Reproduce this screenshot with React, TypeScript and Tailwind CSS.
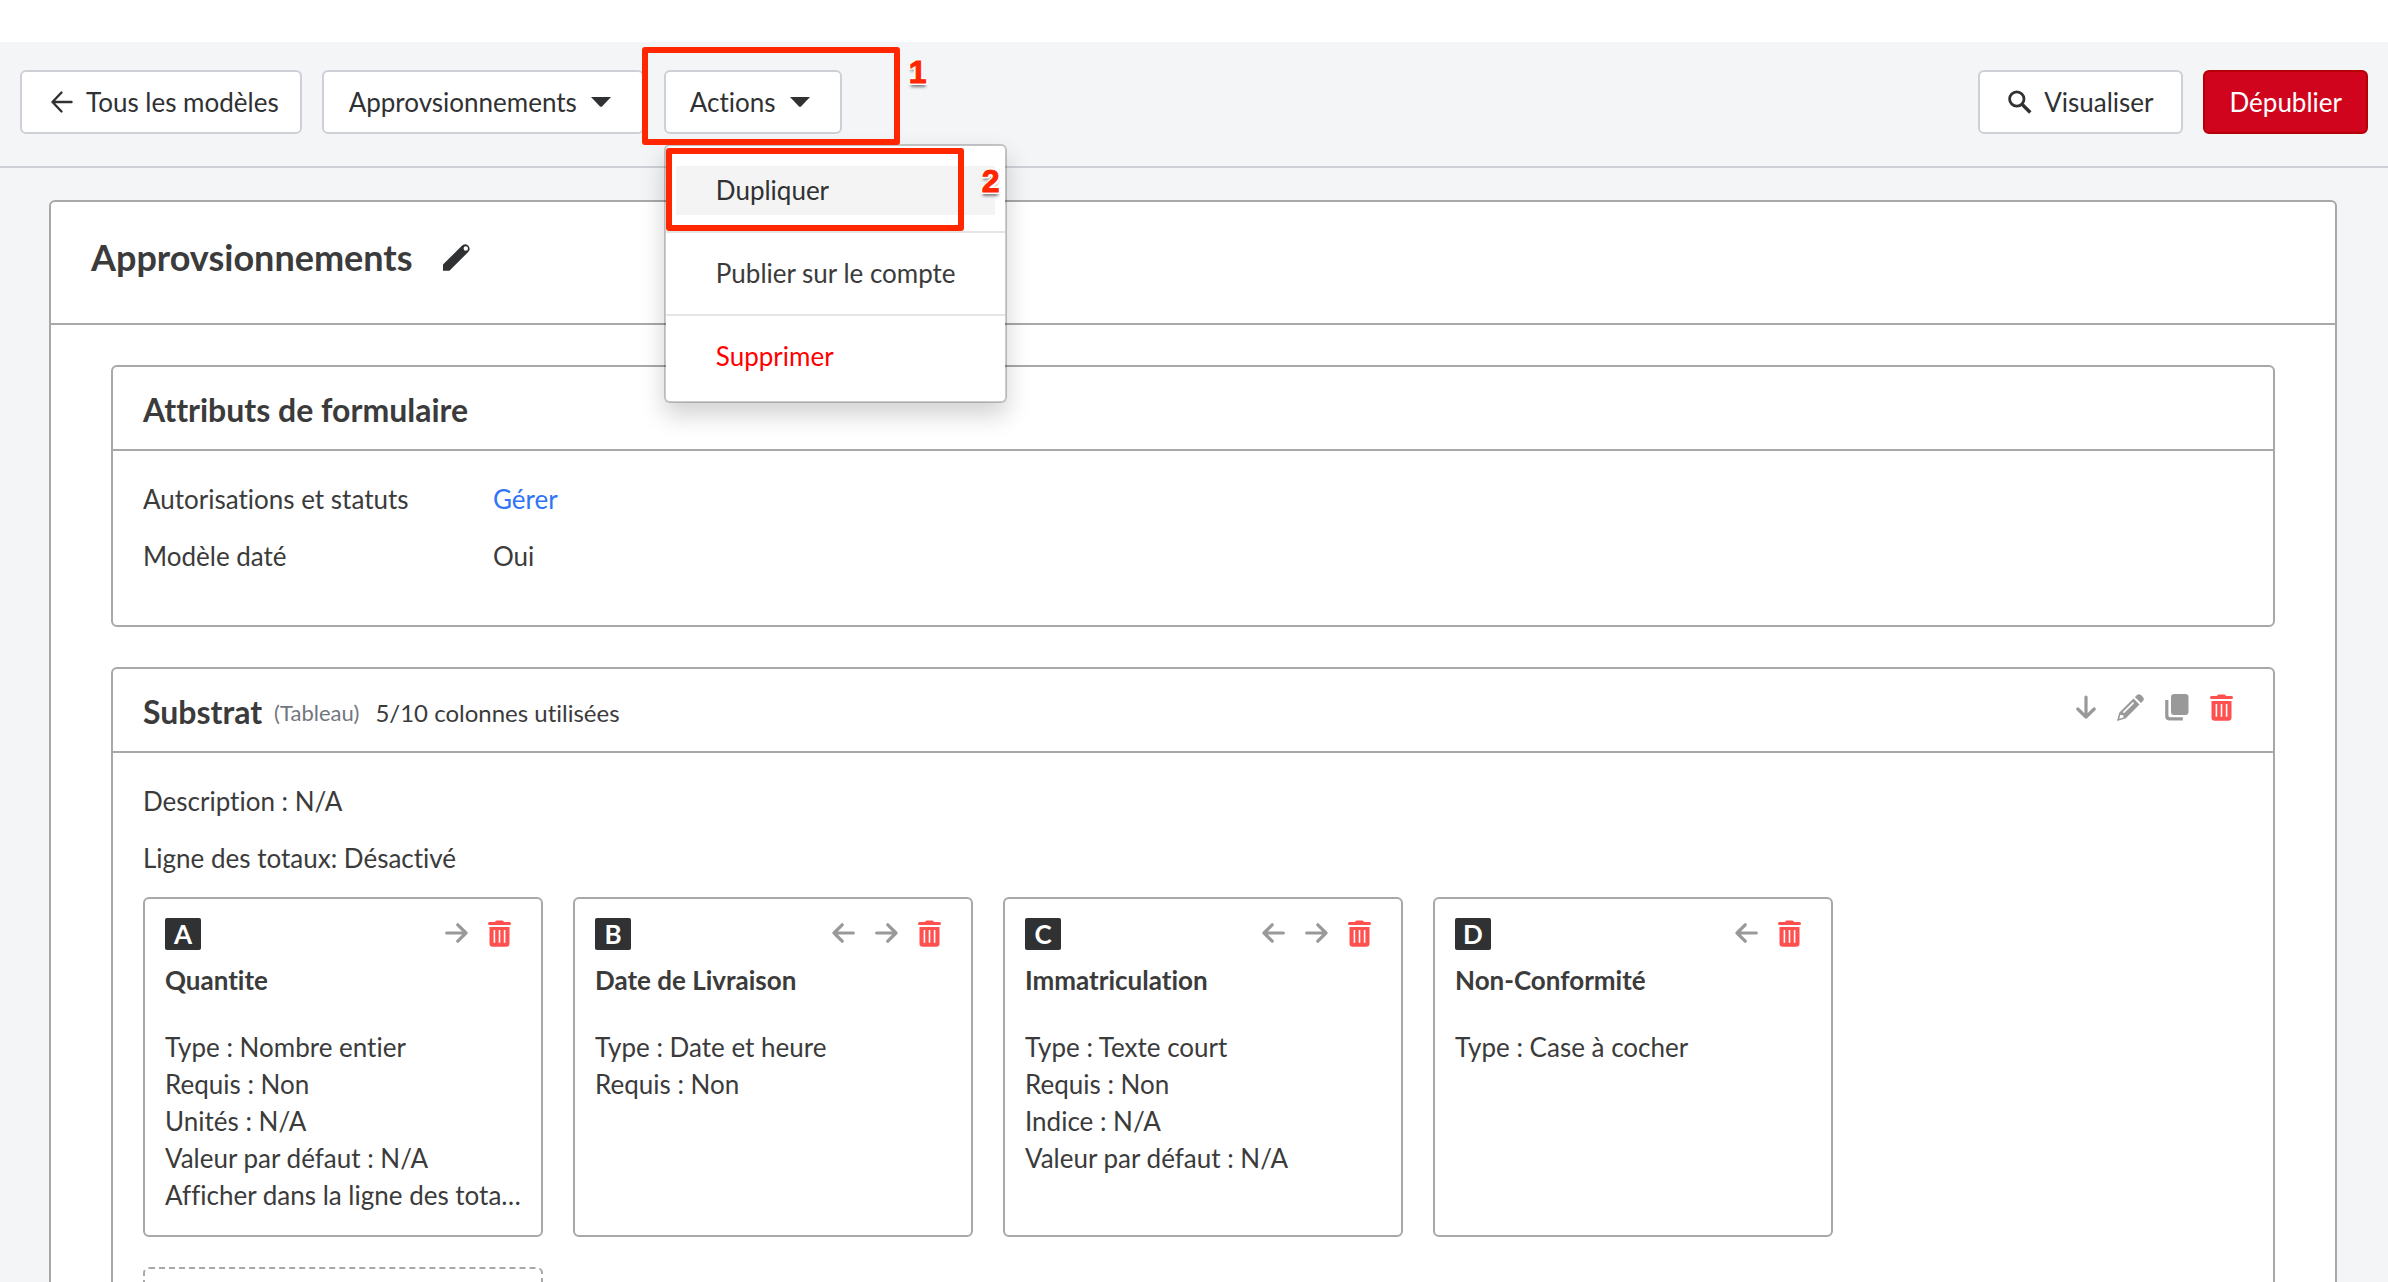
import { ReactNode } from "react";

interface Column {
  letter: string;
  name: string;
  lines: string[];
}

const COLUMNS: Column[] = [
  {
    letter: "A",
    name: "Quantite",
    lines: [
      "Type : Nombre entier",
      "Requis : Non",
      "Unités : N/A",
      "Valeur par défaut : N/A",
      "Afficher dans la ligne des tota…",
    ],
  },
  {
    letter: "B",
    name: "Date de Livraison",
    lines: ["Type : Date et heure", "Requis : Non"],
  },
  {
    letter: "C",
    name: "Immatriculation",
    lines: [
      "Type : Texte court",
      "Requis : Non",
      "Indice : N/A",
      "Valeur par défaut : N/A",
    ],
  },
  {
    letter: "D",
    name: "Non-Conformité",
    lines: ["Type : Case à cocher"],
  },
];

const TOOL_BUTTON =
  "flex h-16 shrink-0 items-center rounded-md border-2 border-[#cfd0d7] bg-white whitespace-nowrap text-[#303133]";

function Caret() {
  return (
    <svg viewBox="0 0 20 10" className="mr-1.5 ml-3.5 h-2.5 w-5" fill="currentColor">
      <path d="M0 0H20L11 9.4Q10 10.3 9 9.4Z" />
    </svg>
  );
}

function Arrow({ direction }: { direction: "left" | "right" }) {
  return (
    <svg
      viewBox="0 0 23 20"
      className="h-5 w-[23px]"
      fill="none"
      stroke="currentColor"
      strokeWidth="3.2"
      strokeLinecap="round"
      strokeLinejoin="round"
    >
      {direction === "left" ? (
        <path d="M21.3 10H2M10.2 1.8L2 10L10.2 18.2" />
      ) : (
        <path d="M1.7 10H21M12.8 1.8L21 10L12.8 18.2" />
      )}
    </svg>
  );
}

function ArrowDown() {
  return (
    <svg
      viewBox="0 0 20 24"
      className="h-6 w-5"
      fill="none"
      stroke="currentColor"
      strokeWidth="3.2"
      strokeLinecap="round"
      strokeLinejoin="round"
    >
      <path d="M10 2V22M1.8 14L10 22L18.2 14" />
    </svg>
  );
}

function Trash() {
  return (
    <svg viewBox="0 0 23 27" className="h-[27px] w-[23px] text-[#ff5050]">
      <path
        fill="currentColor"
        fillRule="evenodd"
        d="M7 2Q7.3 .5 8.8 .5H14.2Q15.7 .5 16 2H21.6Q23 2 23 3.5T21.6 5H1.4Q0 5 0 3.5T1.4 2ZM1.5 7H21.5V23.5Q21.5 26.8 18.2 26.8H4.8Q1.5 26.8 1.5 23.5ZM5.6 10V22.8H7.2V10ZM10.7 10V22.8H12.3V10ZM15.8 10V22.8H17.4V10Z"
      />
    </svg>
  );
}

function Pencil() {
  return (
    <svg viewBox="0 0 27 27" className="h-[27px] w-[27px]">
      <path
        fill="currentColor"
        fillRule="evenodd"
        d="M16.5 4.5L22.5 10.5L8.5 24.4L0 27L2.2 18.8ZM15.9 8L5.8 18.1L7 19.3L17.1 9.2ZM3.4 20.4L2.3 24.7L6.6 23.5L6.3 21.3L4 21Z"
      />
      <path
        fill="currentColor"
        d="M17.9 3.1L20 1Q22 -.7 24 1.1L25.9 3Q27.7 5 26 7L23.9 9.1Z"
      />
    </svg>
  );
}

function Copy() {
  return (
    <svg viewBox="0 0 24 27" className="h-[27px] w-6" fill="currentColor">
      <rect x="6" y="0" width="17.5" height="21" rx="3.2" />
      <path d="M.2 6H3.4V21.5Q3.4 23.2 5 23.2H17.8V26.4H4Q.2 26.4 .2 22.6Z" />
    </svg>
  );
}

function IconButton({ label, children }: { label: string; children: ReactNode }) {
  return (
    <button type="button" aria-label={label} className="flex cursor-pointer items-center">
      {children}
    </button>
  );
}

function ActionsMenu() {
  return (
    <div className="absolute top-[74px] left-0 z-10 w-[343px] rounded-md border-2 border-black/20 bg-white bg-clip-padding py-5 whitespace-nowrap text-[#3b3b3b] shadow-[0_12px_24px_rgba(0,0,0,0.18)]">
      <div className="px-2.5">
        <button type="button" className="block w-full bg-[#f4f4f4] px-10 py-1.5 text-left text-[#303133]">
          Dupliquer
        </button>
      </div>
      <hr className="my-4 border-t-2 border-[#e5e5e5]" />
      <div className="px-2.5">
        <button type="button" className="block w-full px-10 py-1.5 text-left">
          Publier sur le compte
        </button>
      </div>
      <hr className="my-4 border-t-2 border-[#e5e5e5]" />
      <div className="px-2.5">
        <button type="button" className="block w-full px-10 py-1.5 text-left text-[#ff0000]">
          Supprimer
        </button>
      </div>
    </div>
  );
}

const STEP_BOX = "pointer-events-none absolute z-20 rounded-[3px] border-[6px] border-[#ff2600]";
const STEP_NUMBER =
  "pointer-events-none absolute z-20 font-['Liberation_Sans',sans-serif] text-[32px] leading-8 font-bold text-[#ff2600] [-webkit-text-stroke:1px_#ff2600] [text-shadow:2px_0_white,-2px_0_white,0_2px_white,0_-2px_white,2px_2px_white,-2px_2px_white,0_4px_3px_rgba(0,0,0,0.5)]";

// Numbered step markers drawn over the toolbar and its open menu
function Steps() {
  return (
    <>
      <div className={`${STEP_BOX} -top-[23px] -left-[22px] h-[98px] w-[258px]`} />
      <span className={`${STEP_NUMBER} -top-[14px] left-[245px]`}>1</span>
      <div className={`${STEP_BOX} top-[78px] left-[2px] h-[83px] w-[298px]`} />
      <span className={`${STEP_NUMBER} top-[95px] left-[318px]`}>2</span>
    </>
  );
}

function Toolbar() {
  return (
    <header className="mt-[42px] flex items-start justify-between border-b-2 border-[#cfd0d7] bg-[#f4f5f7] px-5 pt-7 pb-8">
      <div className="flex gap-5">
        <button type="button" className={`${TOOL_BUTTON} pr-[21px] pl-7`}>
          <svg
            viewBox="0 0 23 24"
            className="mr-3 h-6 w-6"
            fill="none"
            stroke="currentColor"
            strokeWidth="2.4"
            strokeLinecap="round"
            strokeLinejoin="round"
          >
            <path d="M21 12H2M11 2.5L2 12L11 21.5" />
          </svg>
          Tous les modèles
        </button>
        <button type="button" className={`${TOOL_BUTTON} px-[25px]`}>
          Approvsionnements
          <Caret />
        </button>
        <div className="relative">
          <button type="button" className={`${TOOL_BUTTON} px-6`}>
            Actions
            <Caret />
          </button>
          <ActionsMenu />
          <Steps />
        </div>
      </div>
      <div className="flex gap-5">
        <button type="button" className={`${TOOL_BUTTON} px-7`}>
          <svg
            viewBox="0 0 24 24"
            className="mr-3 h-6 w-6"
            fill="none"
            stroke="currentColor"
            strokeWidth="2.8"
          >
            <circle cx="8.8" cy="9" r="7.2" />
            <path d="M14 14.2L22.3 22.5" strokeWidth="3.4" />
          </svg>
          Visualiser
        </button>
        <button
          type="button"
          className="flex h-16 items-center rounded-md border-2 border-[#b50006] bg-[#d0051d] px-6 text-white"
        >
          Dépublier
        </button>
      </div>
    </header>
  );
}

function ColumnCard({ column, first, last }: { column: Column; first: boolean; last: boolean }) {
  return (
    <div className="h-[340px] w-[400px] rounded-md border-2 border-[#a8a8a8] px-5 pt-[19px]">
      <div className="mb-3 flex items-center justify-between">
        <span className="flex h-8 w-9 items-center justify-center rounded-xs bg-[#303133] font-bold text-white">
          {column.letter}
        </span>
        <div className="flex items-center gap-5 pr-2.5 pb-0.5 text-[#999999]">
          {!first && (
            <IconButton label="Déplacer à gauche">
              <Arrow direction="left" />
            </IconButton>
          )}
          {!last && (
            <IconButton label="Déplacer à droite">
              <Arrow direction="right" />
            </IconButton>
          )}
          <IconButton label="Supprimer la colonne">
            <Trash />
          </IconButton>
        </div>
      </div>
      <h3 className="mb-[30px] font-bold">{column.name}</h3>
      {column.lines.map((line) => (
        <p key={line} className="whitespace-nowrap">
          {line}
        </p>
      ))}
    </div>
  );
}

export default function App() {
  return (
    <div className="h-screen overflow-hidden bg-white font-[Lato,sans-serif] text-[26px] leading-[37px] text-[#3b3b3b] [font-variant-ligatures:none]">
      <Toolbar />
      <div className="bg-[#f4f5f7] pt-8 pr-[51px] pl-[49px]">
        <main className="rounded-md border-2 border-[#a8a8a8] bg-white">
          <div className="flex items-center gap-[30px] border-b-2 border-[#a8a8a8] px-10 pt-[30px] pb-[41px]">
            <h1 className="text-[36px] leading-[50px] font-bold">Approvsionnements</h1>
            <button type="button" aria-label="Renommer" className="text-[#303133]">
              <svg viewBox="0 0 27 27" className="h-[27px] w-[27px]" fill="currentColor">
                <path
                  fillRule="evenodd"
                  d="M0 20.6L18.6 2Q21.8 -1.3 25.2 1.6Q28.2 5 25 8.2L6.4 26.8H0ZM22.8 2.3A2.2 2.2 0 1 0 22.8 6.7A2.2 2.2 0 1 0 22.8 2.3Z"
                />
              </svg>
            </button>
          </div>

          <div className="flex flex-col gap-10 px-[60px] pt-10 pb-10">
            <section className="rounded-md border-2 border-[#a8a8a8]">
              <div className="flex h-[84px] items-center border-b-2 border-[#a8a8a8] px-[30px]">
                <h2 className="pt-1 text-[32px] leading-[46px] font-bold">Attributs de formulaire</h2>
              </div>
              <dl className="grid grid-cols-[350px_1fr] gap-y-5 px-[30px] pt-[30px] pb-[50px]">
                <dt>Autorisations et statuts</dt>
                <dd>
                  <a href="#gerer" className="text-[#2f75f5]">
                    Gérer
                  </a>
                </dd>
                <dt>Modèle daté</dt>
                <dd>Oui</dd>
              </dl>
            </section>

            <section className="rounded-md border-2 border-[#a8a8a8]">
              <div className="flex h-[84px] items-center justify-between border-b-2 border-[#a8a8a8] px-[30px]">
                <div className="flex items-center pt-1">
                  <h2 className="text-[32px] leading-[46px] font-bold">Substrat</h2>
                  <span className="ml-3 text-[22px] text-[#74767f]">(Tableau)</span>
                  <span className="ml-4 text-[24px]">5/10 colonnes utilisées</span>
                </div>
                <div className="flex items-center gap-[21px] pr-2.5 pb-1.5 text-[#999999]">
                  <IconButton label="Déplacer vers le bas">
                    <ArrowDown />
                  </IconButton>
                  <IconButton label="Modifier">
                    <Pencil />
                  </IconButton>
                  <IconButton label="Dupliquer le tableau">
                    <Copy />
                  </IconButton>
                  <IconButton label="Supprimer le tableau">
                    <Trash />
                  </IconButton>
                </div>
              </div>
              <div className="px-[30px] pt-[30px] pb-[30px]">
                <p className="mb-5">Description : N/A</p>
                <p className="mb-5">Ligne des totaux: Désactivé</p>
                <div className="flex flex-wrap gap-[30px]">
                  {COLUMNS.map((column, i) => (
                    <ColumnCard
                      key={column.letter}
                      column={column}
                      first={i === 0}
                      last={i === COLUMNS.length - 1}
                    />
                  ))}
                  <div className="h-[340px] w-[400px] rounded-md border-2 border-dashed border-[#a8a8a8]" />
                </div>
              </div>
            </section>
          </div>
        </main>
      </div>
    </div>
  );
}
